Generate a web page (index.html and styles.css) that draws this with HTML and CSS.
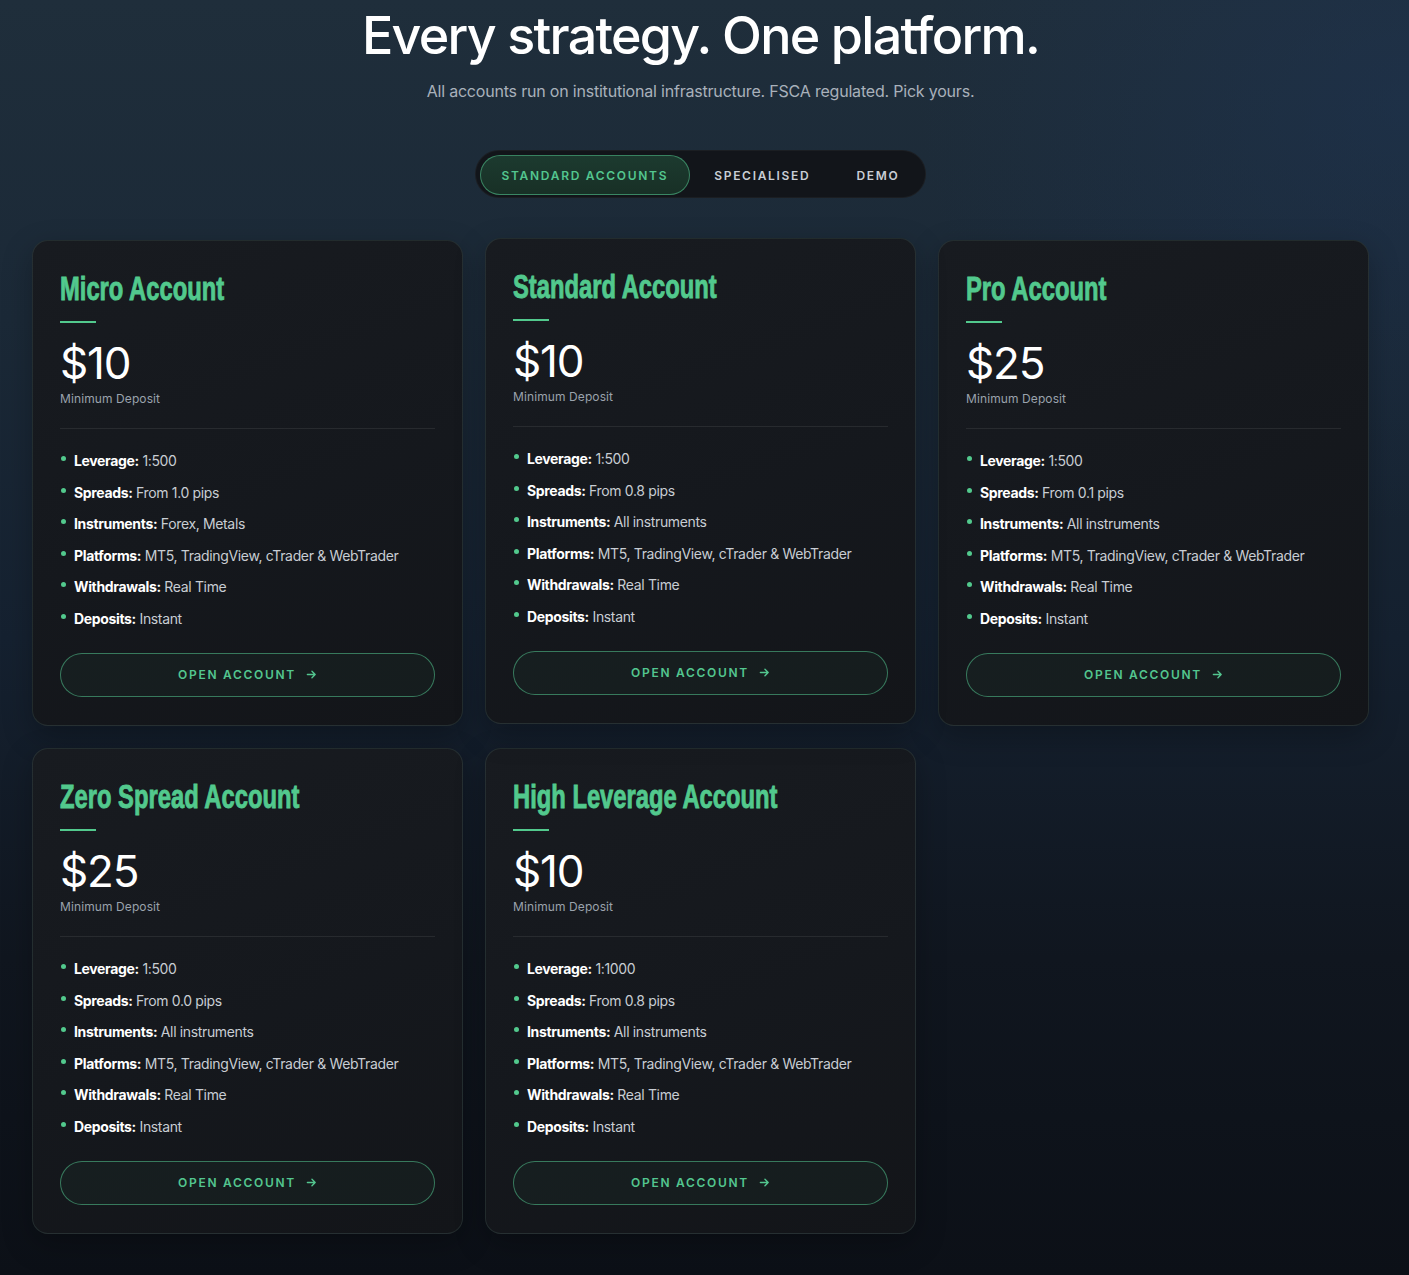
FILE: index.html
```html
<!DOCTYPE html>
<html lang="en">
<head>
<meta charset="utf-8">
<title>Accounts</title>
<link rel="stylesheet" href="styles.css">
</head>
<body>
<main class="page">
  <header class="intro">
    <h1 class="intro-title">Every strategy. One platform.</h1>
    <p class="intro-sub">All accounts run on institutional infrastructure. FSCA regulated. Pick yours.</p>
  </header>

  <nav class="tabs">
    <button class="tab tab-active">STANDARD ACCOUNTS</button>
    <button class="tab">SPECIALISED</button>
    <button class="tab">DEMO</button>
  </nav>

  <section class="grid">
    <article class="card">
      <h3 class="card-title"><span class="card-title-text">Micro Account</span></h3>
      <div class="accent"></div>
      <div class="price">$10</div>
      <div class="price-label">Minimum Deposit</div>
      <div class="divider"></div>
      <ul class="features">
        <li><b>Leverage:</b> 1:500</li>
        <li><b>Spreads:</b> From 1.0 pips</li>
        <li><b>Instruments:</b> Forex, Metals</li>
        <li><b>Platforms:</b> MT5, TradingView, cTrader &amp; WebTrader</li>
        <li><b>Withdrawals:</b> Real Time</li>
        <li><b>Deposits:</b> Instant</li>
      </ul>
      <a class="cta" href="#">OPEN ACCOUNT <svg class="arrow" viewBox="0 0 12 12" width="11" height="11"><path d="M1.5 6h8.5M6.5 2.5 10 6l-3.5 3.5" fill="none" stroke="currentColor" stroke-width="1.5" stroke-linecap="round" stroke-linejoin="round"/></svg></a>
    </article>

    <article class="card card-raised">
      <h3 class="card-title"><span class="card-title-text">Standard Account</span></h3>
      <div class="accent"></div>
      <div class="price">$10</div>
      <div class="price-label">Minimum Deposit</div>
      <div class="divider"></div>
      <ul class="features">
        <li><b>Leverage:</b> 1:500</li>
        <li><b>Spreads:</b> From 0.8 pips</li>
        <li><b>Instruments:</b> All instruments</li>
        <li><b>Platforms:</b> MT5, TradingView, cTrader &amp; WebTrader</li>
        <li><b>Withdrawals:</b> Real Time</li>
        <li><b>Deposits:</b> Instant</li>
      </ul>
      <a class="cta" href="#">OPEN ACCOUNT <svg class="arrow" viewBox="0 0 12 12" width="11" height="11"><path d="M1.5 6h8.5M6.5 2.5 10 6l-3.5 3.5" fill="none" stroke="currentColor" stroke-width="1.5" stroke-linecap="round" stroke-linejoin="round"/></svg></a>
    </article>

    <article class="card">
      <h3 class="card-title"><span class="card-title-text">Pro Account</span></h3>
      <div class="accent"></div>
      <div class="price">$25</div>
      <div class="price-label">Minimum Deposit</div>
      <div class="divider"></div>
      <ul class="features">
        <li><b>Leverage:</b> 1:500</li>
        <li><b>Spreads:</b> From 0.1 pips</li>
        <li><b>Instruments:</b> All instruments</li>
        <li><b>Platforms:</b> MT5, TradingView, cTrader &amp; WebTrader</li>
        <li><b>Withdrawals:</b> Real Time</li>
        <li><b>Deposits:</b> Instant</li>
      </ul>
      <a class="cta" href="#">OPEN ACCOUNT <svg class="arrow" viewBox="0 0 12 12" width="11" height="11"><path d="M1.5 6h8.5M6.5 2.5 10 6l-3.5 3.5" fill="none" stroke="currentColor" stroke-width="1.5" stroke-linecap="round" stroke-linejoin="round"/></svg></a>
    </article>

    <article class="card">
      <h3 class="card-title"><span class="card-title-text">Zero Spread Account</span></h3>
      <div class="accent"></div>
      <div class="price">$25</div>
      <div class="price-label">Minimum Deposit</div>
      <div class="divider"></div>
      <ul class="features">
        <li><b>Leverage:</b> 1:500</li>
        <li><b>Spreads:</b> From 0.0 pips</li>
        <li><b>Instruments:</b> All instruments</li>
        <li><b>Platforms:</b> MT5, TradingView, cTrader &amp; WebTrader</li>
        <li><b>Withdrawals:</b> Real Time</li>
        <li><b>Deposits:</b> Instant</li>
      </ul>
      <a class="cta" href="#">OPEN ACCOUNT <svg class="arrow" viewBox="0 0 12 12" width="11" height="11"><path d="M1.5 6h8.5M6.5 2.5 10 6l-3.5 3.5" fill="none" stroke="currentColor" stroke-width="1.5" stroke-linecap="round" stroke-linejoin="round"/></svg></a>
    </article>

    <article class="card">
      <h3 class="card-title"><span class="card-title-text">High Leverage Account</span></h3>
      <div class="accent"></div>
      <div class="price">$10</div>
      <div class="price-label">Minimum Deposit</div>
      <div class="divider"></div>
      <ul class="features">
        <li><b>Leverage:</b> 1:1000</li>
        <li><b>Spreads:</b> From 0.8 pips</li>
        <li><b>Instruments:</b> All instruments</li>
        <li><b>Platforms:</b> MT5, TradingView, cTrader &amp; WebTrader</li>
        <li><b>Withdrawals:</b> Real Time</li>
        <li><b>Deposits:</b> Instant</li>
      </ul>
      <a class="cta" href="#">OPEN ACCOUNT <svg class="arrow" viewBox="0 0 12 12" width="11" height="11"><path d="M1.5 6h8.5M6.5 2.5 10 6l-3.5 3.5" fill="none" stroke="currentColor" stroke-width="1.5" stroke-linecap="round" stroke-linejoin="round"/></svg></a>
    </article>
  </section>
</main>
</body>
</html>
```

FILE: styles.css
```css
* { box-sizing: border-box; }

html, body {
  margin: 0;
  padding: 0;
}

body {
  min-height: 1275px;
  font-family: Inter, "Noto Sans", "Liberation Sans", sans-serif;
  color: #ffffff;
  background:
    radial-gradient(ellipse 700px 600px at 100% 8%, rgba(30, 52, 84, 0.5), rgba(30, 52, 84, 0) 70%),
    linear-gradient(180deg, #1f2e3b 0%, #1b2937 25%, #152130 50%, #10161f 75%, #0c1017 100%);
}

.page {
  width: 1401px;
  display: flex;
  flex-direction: column;
  align-items: center;
  padding-top: 6px;
  padding-bottom: 43px;
}

.intro {
  display: flex;
  flex-direction: column;
  align-items: center;
}

.intro-title {
  margin: 0;
  font-size: 52px;
  line-height: 60px;
  font-weight: 500;
  letter-spacing: -1.7px;
  color: #ffffff;
}

.intro-sub {
  margin: 14px 0 0;
  font-size: 16px;
  line-height: 22px;
  font-weight: 400;
  letter-spacing: -0.2px;
  color: #a9b1bb;
}

.tabs {
  margin-top: 48px;
  display: flex;
  gap: 2px;
  padding: 4px;
  height: 48px;
  border-radius: 999px;
  background: #12151a;
  border: 1px solid rgba(255, 255, 255, 0.04);
}

.tab {
  height: 40px;
  padding: 0 21px;
  border: 1px solid transparent;
  border-radius: 999px;
  background: transparent;
  font-family: Inter, "Noto Sans", sans-serif;
  font-size: 12px;
  font-weight: 600;
  letter-spacing: 1.7px;
  color: #c9ced5;
  cursor: pointer;
}

.tab-active {
  color: #53c68f;
  border-color: rgba(83, 198, 143, 0.55);
  background: linear-gradient(180deg, #1c3a2f 0%, #183026 100%);
}

.grid {
  margin-top: 42px;
  display: grid;
  grid-template-columns: repeat(3, 431px);
  gap: 22px;
}

.card {
  display: flex;
  flex-direction: column;
  padding: 28px 27px 28px;
  border-radius: 16px;
  background: linear-gradient(160deg, #181b20 0%, #15181d 55%, #131519 100%);
  border: 1px solid rgba(120, 160, 150, 0.16);
  box-shadow: 0 10px 30px rgba(0, 0, 0, 0.25);
}

.card-raised {
  transform: translateY(-2px);
}

.card-title {
  margin: 0;
  font-family: "Liberation Sans", Arial, sans-serif;
  font-size: 33px;
  line-height: 40px;
  font-weight: 700;
  color: #52c98d;
  white-space: nowrap;
}

.card-title-text {
  display: inline-block;
  transform: scaleX(0.72);
  transform-origin: left center;
  -webkit-text-stroke: 0.9px #52c98d;
}

.accent {
  margin-top: 12px;
  width: 36px;
  height: 2px;
  background: #52c98d;
}

.price {
  margin-top: 16px;
  font-size: 44px;
  line-height: 48px;
  font-weight: 400;
  letter-spacing: -1.2px;
  color: #ffffff;
}

.price-label {
  margin-top: 4px;
  font-size: 12px;
  line-height: 16px;
  color: #9aa2ac;
  letter-spacing: 0.1px;
}

.divider {
  margin-top: 21px;
  height: 1px;
  background: rgba(255, 255, 255, 0.08);
}

.features {
  list-style: none;
  margin: 22px 0 0;
  padding: 0;
  display: flex;
  flex-direction: column;
  gap: 11.6px;
}

.features li {
  position: relative;
  padding-left: 14px;
  font-size: 14px;
  line-height: 20px;
  color: #c8cdd3;
  letter-spacing: -0.35px;
}

.features li::before {
  content: "";
  position: absolute;
  left: 1px;
  top: 5px;
  width: 5px;
  height: 5px;
  border-radius: 50%;
  background: #52c98d;
}

.features b {
  font-weight: 700;
  color: #ffffff;
}

.cta {
  margin-top: 24px;
  height: 44px;
  display: flex;
  align-items: center;
  justify-content: center;
  gap: 10px;
  border-radius: 999px;
  border: 1px solid rgba(83, 198, 143, 0.55);
  background: rgba(83, 198, 143, 0.04);
  color: #53c68f;
  text-decoration: none;
  font-size: 12px;
  font-weight: 600;
  letter-spacing: 1.7px;
}

.arrow {
  display: block;
}
```
